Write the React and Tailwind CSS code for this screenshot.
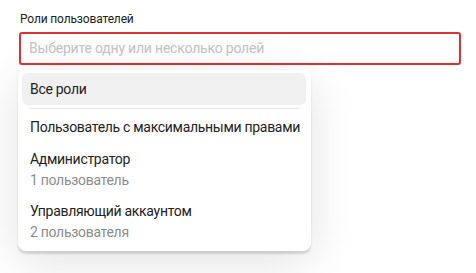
import React from "react";

const roles = [
  { title: "Администратор", sub: "1 пользователь" },
  { title: "Управляющий аккаунтом", sub: "2 пользователя" },
];

export default function App() {
  return (
    <div className="w-[476px] h-[273px] bg-white overflow-hidden pt-[11px] pl-[19px] font-['Roboto',sans-serif]">
      <div className="w-[442px]">
        <div className="pl-[1px] text-[12px] leading-4 tracking-[-0.15px] text-[#222]">Роли пользователей</div>

        <div className="relative mt-[5px]">
          <div className="h-[33px] rounded-[3px] border-2 border-[#dc3232] flex items-center px-2 text-[14px] tracking-[-0.2px] text-[#c4c4c4] whitespace-nowrap">
            Выберите одну или несколько ролей
          </div>

          {/* dropdown menu */}
          <div className="absolute top-[38px] left-[-1px] w-[293px] bg-white rounded-[8px] px-[4px] pt-[3px] pb-[4px] shadow-[0_3px_2px_rgba(0,0,0,0.13),0_10px_48px_rgba(0,0,0,0.12)] text-[14px] leading-5 tracking-[-0.3px] text-[#222] whitespace-nowrap">
            <div className="h-8 rounded-[6px] bg-[#f0f0f0] px-2 flex items-center mr-[1px]">Все роли</div>
            <div className="mt-[3px] mx-2 h-px bg-[#e6e6e6]" />
            <div className="mt-[2px] h-8 px-2 flex items-center">Пользователь с максимальными правами</div>
            {roles.map((r) => (
              <div key={r.title} className="px-2 pt-[6px] pb-[5px] flex flex-col gap-px">
                <span>{r.title}</span>
                <span className="text-[#8c8c8c]">{r.sub}</span>
              </div>
            ))}
          </div>
        </div>
      </div>
    </div>
  );
}
